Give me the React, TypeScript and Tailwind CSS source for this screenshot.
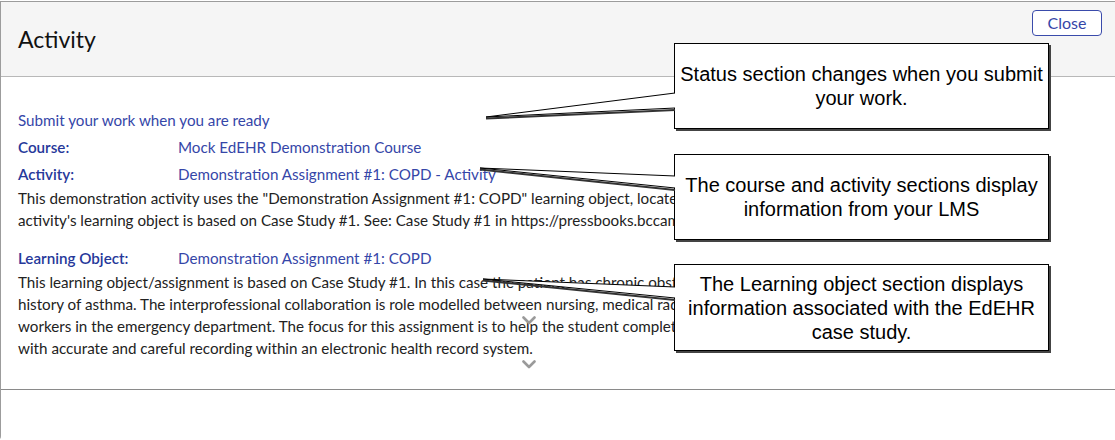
import React from 'react';

const BLUE = 'text-[#3546a8]';

function Callout({ top, height, children }: { top: string; height: string; children: React.ReactNode }) {
  return (
    <div
      className={`absolute left-[674px] w-[375px] ${top} ${height} flex items-center justify-center border border-black bg-white text-center font-['Liberation_Sans',Arial,sans-serif] text-[20px] leading-[24px] text-black shadow-[2px_2px_0_#444]`}
    >
      <p>{children}</p>
    </div>
  );
}

function Row({ label, value }: { label: string; value: string }) {
  return (
    <div className="flex h-[27px] items-center">
      <span className="w-[160px] font-semibold text-[#26389a]">{label}</span>
      <span className={BLUE}>{value}</span>
    </div>
  );
}

function Chevron({ className }: { className: string }) {
  return (
    <svg className={className} width="14" height="9" viewBox="0 0 14 9">
      <path d="M1.5 1.5 L7 7 L12.5 1.5" fill="none" stroke="#9a9a9a" strokeWidth="2.6" strokeLinecap="round" strokeLinejoin="round" />
    </svg>
  );
}

export default function App() {
  return (
    <div className="relative h-[440px] w-[1115px] overflow-hidden bg-white pt-[1px] font-['Lato','Noto_Sans',sans-serif] text-[15.2px] text-[#222]">
      <div className="flex h-[439px] flex-col rounded-bl-[4px] border-l border-t border-[#9c9c9c]">
        {/* header */}
        <div className="flex h-[75px] items-start justify-between border-b border-[#b8b8b8] bg-[#f5f5f5] pl-[17px] pr-[13px]">
          <h1 className="mt-[23px] text-[23px] leading-[28px] text-[#111]">Activity</h1>
          <button className="mt-[8px] h-[26px] w-[70px] rounded-[4px] border border-[#3a4bab] bg-white text-[16px] text-[#3546a8]">
            Close
          </button>
        </div>

        {/* body */}
        <div className="relative h-[313px] border-b border-[#8a8a8a] pl-[17px] pt-[32px] leading-[22px]">
          <div className={`h-[24px] ${BLUE}`}>Submit your work when you are ready</div>
          <Row label="Course:" value="Mock EdEHR Demonstration Course" />
          <Row label="Activity:" value="Demonstration Assignment #1: COPD - Activity" />
          <p className="whitespace-nowrap">
            This demonstration activity uses the "Demonstration Assignment #1: COPD" learning object, located in the EdEHR. This
            <br />
            activity's learning object is based on Case Study #1. See: Case Study #1 in https://pressbooks.bccampus.ca/
          </p>
          <div className="mt-[13px]">
            <Row label="Learning Object:" value="Demonstration Assignment #1: COPD" />
          </div>
          <p className="whitespace-nowrap">
            This learning object/assignment is based on Case Study #1. In this case the patient has chronic obstructive pulmonary
            <br />
            history of asthma. The interprofessional collaboration is role modelled between nursing, medical radiology and social
            <br />
            workers in the emergency department. The focus for this assignment is to help the student complete an assessment
            <br />
            with accurate and careful recording within an electronic health record system.
          </p>
          <Chevron className="absolute left-[521px] top-[239px]" />
          <Chevron className="absolute left-[521px] top-[283px]" />
        </div>
        <div className="flex-1 bg-white" />
      </div>

      {/* annotation callouts */}
      <Callout top="top-[43px]" height="h-[86px]">
        Status section changes when you submit
        <br />
        your work.
      </Callout>
      <Callout top="top-[154px]" height="h-[86px]">
        The course and activity sections display
        <br />
        information from your LMS
      </Callout>
      <Callout top="top-[264px]" height="h-[87px]">
        The Learning object section displays
        <br />
        information associated with the EdEHR
        <br />
        case study.
      </Callout>

      <svg className="pointer-events-none absolute left-0 top-0" width="1115" height="440">
        {[
          [93, 486, 117, 108],
          [176, 480, 168, 188],
          [287, 483, 279, 298],
        ].map(([y1, tx, ty, y2]) => (
          <g key={y1}>
            <line x1={tx} y1={ty + 1.5} x2={675} y2={y2 + 2} stroke="#333" strokeWidth="2" />
            <polygon points={`675.5,${y1} ${tx},${ty} 675.5,${y2}`} fill="#fff" />
            <line x1={675} y1={y1} x2={tx} y2={ty} stroke="#000" strokeWidth="1" />
            <line x1={tx} y1={ty} x2={675} y2={y2} stroke="#000" strokeWidth="1" />
          </g>
        ))}
      </svg>
    </div>
  );
}
